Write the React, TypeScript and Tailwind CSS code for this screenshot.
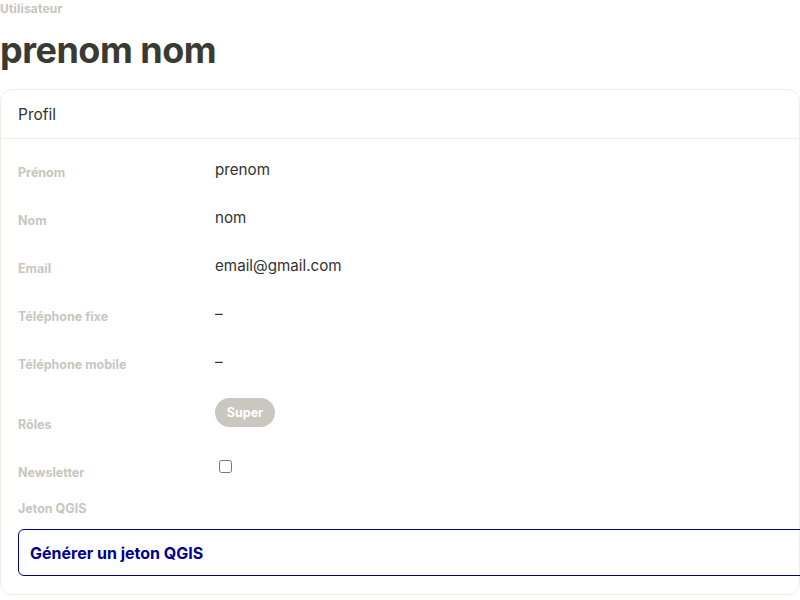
import { useState } from 'react';

const rows = [
  { label: 'Prénom', value: 'prenom' },
  { label: 'Nom', value: 'nom' },
  { label: 'Email', value: 'email@gmail.com' },
  { label: 'Téléphone fixe', value: '–' },
  { label: 'Téléphone mobile', value: '–' },
];

export default function App() {
  const [newsletter, setNewsletter] = useState(false);

  return (
    <div className="w-[800px] h-[600px] overflow-hidden bg-white font-['Inter',sans-serif]">
      <div className="text-[12px] leading-[18px] font-bold text-[#c5c3bb] tracking-[0.2px]">Utilisateur</div>
      <h1 className="mt-[12px] text-[36px] leading-[40px] font-bold text-[#3a3a33] tracking-[-0.5px]">prenom nom</h1>

      <div className="mt-[19px] w-[800px] border border-[#eeede8] rounded-[12px] bg-white">
        <div className="px-[17px] pt-[13px] pb-[11px] text-[15.5px] leading-[24px] text-[#333] border-b border-[#eeede8]">
          Profil
        </div>

        <div className="px-[17px] pt-[18px] pb-[18px]">
          {rows.map((r) => (
            <div key={r.label} className="flex h-[48px]">
              <div className="w-[197px] mt-[8px] text-[12.5px] leading-[16px] font-bold text-[#c8c6bf]">
                {r.label}
              </div>
              <div className="mt-[1px] text-[15.2px] leading-[24px] text-[#333]">{r.value}</div>
            </div>
          ))}

          <div className="flex h-[60px]">
            <div className="w-[197px] mt-[20px] text-[12.5px] leading-[16px] font-bold text-[#c8c6bf]">Rôles</div>
            <div className="mt-[1px]">
              <span className="inline-flex items-center justify-center h-[29px] w-[60px] pt-[1px] rounded-full bg-[#c9c7c0] text-white text-[12.5px] font-bold">
                Super
              </span>
            </div>
          </div>

          <div className="flex h-[36px]">
            <div className="w-[197px] mt-[8px] text-[12.5px] leading-[16px] font-bold text-[#c8c6bf]">Newsletter</div>
            <div>
              <input
                type="checkbox"
                checked={newsletter}
                onChange={(e) => setNewsletter(e.target.checked)}
                className="block mt-[3px] ml-[4px] w-[13px] h-[13px]"
              />
            </div>
          </div>

          <div className="mt-[8px] text-[12.5px] leading-[16px] font-bold text-[#c8c6bf]">Jeton QGIS</div>

          <button className="mt-[12px] w-[820px] h-[47px] border border-[#000091] rounded-[6px] px-[11px] text-left text-[16px] font-bold text-[#000091]">
            Générer un jeton QGIS
          </button>
        </div>
      </div>
    </div>
  );
}
